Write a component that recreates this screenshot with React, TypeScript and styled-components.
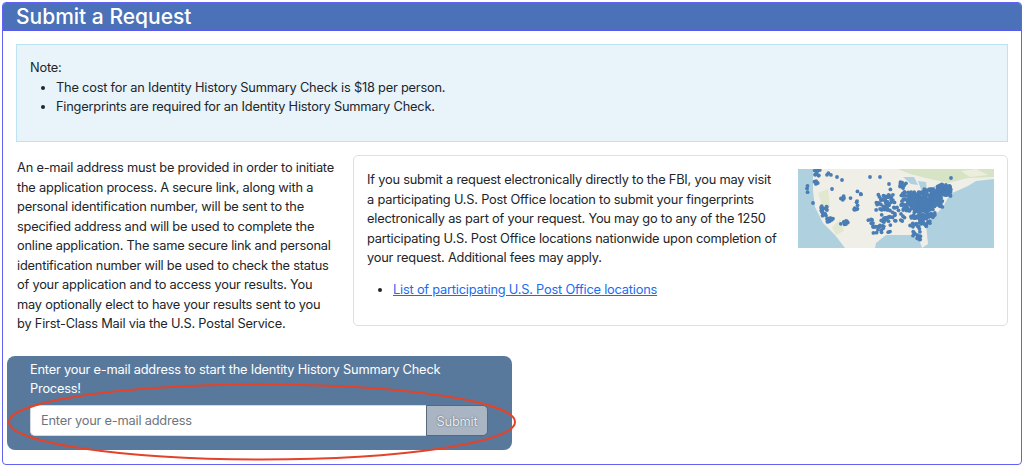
import styled, { createGlobalStyle } from "styled-components"

const GlobalStyle = createGlobalStyle`
	html, body {
		margin: 0;
		padding: 0;
		background: #ffffff;
	}
	body {
		font-family: "Inter", "Liberation Sans", sans-serif;
		font-size: 12.8px;
		letter-spacing: -0.2px;
		line-height: 19.5px;
		color: #212529;
	}
`

// cx, cy, count, spread x, spread y
const clusters: number[][] = [
	[116, 33, 130, 13, 10],
	[125, 40, 110, 12, 10],
	[135, 29, 120, 10, 9],
	[146, 21, 70, 7, 6],
	[122, 52, 40, 10, 6],
	[88, 33, 44, 10, 8],
	[95, 45, 34, 12, 8],
	[84, 60, 18, 9, 4],
	[100, 18, 12, 8, 5],
	[118, 62, 8, 4, 5],
	[121, 70, 6, 2, 4],
	[72, 50, 5, 3, 6],
	[26, 42, 16, 3, 5],
	[32, 51, 12, 3, 2],
	[45, 54, 6, 5, 3],
	[59, 38, 6, 4, 3],
	[58, 28, 6, 7, 6],
	[19, 4, 10, 3, 3],
	[18, 14, 4, 2, 4],
	[31, 5, 3, 4, 1],
	[44, 29, 6, 2, 2],
	[10, 20, 3, 1, 4],
]

const random = (seed: number) => {
	const x = Math.sin(seed * 127.1) * 43758.5453
	return x - Math.floor(x)
}

const pins = clusters.flatMap(([cx, cy, count, sx, sy], i) =>
	Array.from({ length: count }, (_, n) => ({
		x: cx + (random(i * 100 + n + 1) - 0.5) * sx * 2,
		y: cy + (random(i * 100 + n + 501) - 0.5) * sy * 2,
	})),
)

const singles = [
	[39, 8], [44, 11], [72, 8], [82, 8], [91, 15], [153, 9], [34, 20], [48, 55], [15, 34],
]

const UsMap = () => (
	<MapSvg viewBox="0 0 196 79" aria-hidden="true">
		<defs>
			<filter id="soft">
				<feGaussianBlur stdDeviation="0.4" />
			</filter>
		</defs>
		<rect width="196" height="79" fill="#aed0df" />
		<g filter="url(#soft)">
			<path
				d="M15 0 L15 22 L17 38 L25 54 L37 66 L47 79 L77 79 L78 74 L88 66 L115 66 L119 64 L124 79 L130 75 L128 55 L145 38 L152 25 L170 17 L178 12 L196 10 L196 0 Z"
				fill="#f0efe7"
			/>
			<path d="M100 0 L196 0 L196 8 L170 9 L150 14 L128 9 L112 5 Z" fill="#d6e3c4" />
			<path d="M20 24 L30 20 L32 38 L24 36 Z M34 58 L42 50 L46 62 L38 66 Z" fill="#e2e8d0" />
			<path d="M105 8 L116 8 L120 16 L113 15 Z M120 12 L128 13 L129 22 L124 23 Z M130 20 L142 15 L143 18 L133 23 Z" fill="#aed0df" />
			<path d="M163 2 L178 0 L190 6 L172 8 Z" fill="#eceedd" />
			{pins.map((p, i) => (
				<circle key={i} cx={p.x} cy={p.y} r="1.9" fill="#4a7db4" />
			))}
			{singles.map(([x, y], i) => (
				<circle key={i} cx={x} cy={y} r="1.9" fill="#4a7db4" />
			))}
		</g>
	</MapSvg>
)

const App = () => (
	<>
		<GlobalStyle />
		<Frame>
			<Header>Submit a Request</Header>
			<Content>
				<NoteBox>
					Note:
					<NoteList>
						<li>The cost for an Identity History Summary Check is $18 per person.</li>
						<li>Fingerprints are required for an Identity History Summary Check.</li>
					</NoteList>
				</NoteBox>
				<Columns>
					<Intro>
						An e-mail address must be provided in order to initiate the application process. A
						secure link, along with a personal identification number, will be sent to the
						specified address and will be used to complete the online application. The same secure
						link and personal identification number will be used to check the status of your
						application and to access your results. You may optionally elect to have your results
						sent to you by First-Class Mail via the U.S. Postal Service.
					</Intro>
					<Card>
						<CardTop>
							<CardText>
								If you submit a request electronically directly to the FBI, you may visit a
								participating U.S. Post Office location to submit your fingerprints electronically
								as part of your request. You may go to any of the 1250 participating U.S. Post
								Office locations nationwide upon completion of your request. Additional fees may
								apply.
							</CardText>
							<UsMap />
						</CardTop>
						<LinkList>
							<li>
								<a href="#locations">List of participating U.S. Post Office locations</a>
							</li>
						</LinkList>
					</Card>
				</Columns>
				<FormPanel>
					<FormLabel>Enter your e-mail address to start the Identity History Summary Check Process!</FormLabel>
					<InputRow>
						<EmailInput placeholder="Enter your e-mail address" />
						<SubmitButton type="button">Submit</SubmitButton>
					</InputRow>
					<Ellipse viewBox="0 0 510 80" aria-hidden="true">
						<ellipse cx="255" cy="40" rx="253" ry="37.5" fill="none" stroke="#e2442b" strokeWidth="2" />
					</Ellipse>
				</FormPanel>
			</Content>
		</Frame>
	</>
)

export default App

const Frame = styled.div`
	margin: 2px 2px 0;
	height: 463px;
	box-sizing: border-box;
	border: 1px solid #6262f2;
	border-radius: 4px;
	background: #ffffff;
	overflow: hidden;
`

const Header = styled.h1`
	margin: 0;
	height: 27px;
	padding-left: 13px;
	background: #4b71b8;
	border-bottom: 1px solid #5a5aee;
	color: #ffffff;
	font-size: 21px;
	letter-spacing: 0;
	font-weight: 500;
	line-height: 27px;
`

const Content = styled.div`
	display: flex;
	flex-direction: column;
	align-items: flex-start;
	padding: 13px 13px 0 4px;
`

const NoteBox = styled.div`
	box-sizing: border-box;
	align-self: stretch;
	margin-left: 9px;
	height: 98px;
	padding: 13px 13px 0;
	background: #e8f4fa;
	border: 1px solid #bce3f3;
`

const NoteList = styled.ul`
	margin: 0;
	padding-left: 26px;
`

const Columns = styled.div`
	display: flex;
	align-self: stretch;
	gap: 16px;
	margin-top: 13px;
	padding-left: 10px;
`

const Intro = styled.p`
	width: 320px;
	flex-shrink: 0;
	margin: 3px 0 0;
`

const Card = styled.div`
	box-sizing: border-box;
	flex: 1;
	height: 171px;
	padding: 13px 13px 0;
	border: 1px solid #dcdfe3;
	border-radius: 5px;
`

const CardTop = styled.div`
	display: flex;
	justify-content: space-between;
	align-items: flex-start;
`

const CardText = styled.p`
	width: 412px;
	margin: 1px 0 0;
`

const MapSvg = styled.svg`
	display: block;
	width: 196px;
	height: 79px;
	flex-shrink: 0;
`

const LinkList = styled.ul`
	margin: 12px 0 0;
	padding-left: 26px;

	a {
		color: #1a6cf0;
	}
`

const FormPanel = styled.div`
	position: relative;
	box-sizing: border-box;
	width: 505px;
	height: 94px;
	margin-top: 22px;
	padding: 4px 23px 0;
	background: #59799c;
	border-radius: 8px;
`

const FormLabel = styled.div`
	color: #ffffff;
`

const InputRow = styled.div`
	display: flex;
	height: 31px;
	margin-top: 6px;
	width: 458px;
`

const EmailInput = styled.input`
	box-sizing: border-box;
	flex: 1;
	min-width: 0;
	padding: 2px 10px 0;
	border: 1px solid #d5dae0;
	border-right: none;
	border-radius: 5px 0 0 5px;
	background: #ffffff;
	font: inherit;
	letter-spacing: inherit;
	outline: none;

	&::placeholder {
		color: #6c757d;
		opacity: 1;
	}
`

const SubmitButton = styled.button`
	box-sizing: border-box;
	width: 62px;
	padding: 3px 0 0;
	border: 1px solid #56687c;
	border-radius: 0 5px 5px 0;
	background: #aab5c3;
	color: #e9edf1;
	text-shadow: 0 0 1.5px #3f4a55;
	font: inherit;
	letter-spacing: inherit;
`

const Ellipse = styled.svg`
	position: absolute;
	left: 0;
	top: 26px;
	width: 510px;
	height: 80px;
	overflow: visible;
	pointer-events: none;
`
